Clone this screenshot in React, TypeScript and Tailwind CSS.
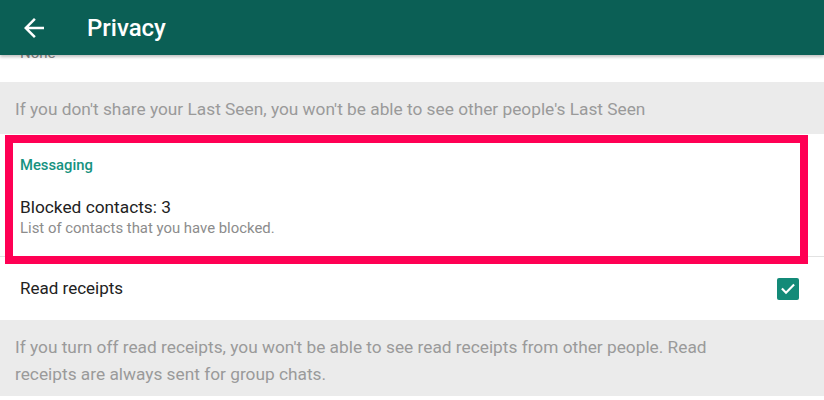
import React from "react";

export default function App() {
  return (
    <div className="w-[824px] h-[400px] overflow-hidden bg-white" style={{ fontFamily: "Roboto, 'Noto Sans', sans-serif" }}>
      <div className="relative z-10 h-[55px] bg-[#0b5f55] flex items-center shadow-[0_2px_3px_rgba(0,0,0,0.25)]">
        <div className="w-[87px] flex items-center pl-[19px]">
          <svg width="30" height="30" viewBox="0 0 24 24" fill="white">
            <path d="M20 11H7.83l5.59-5.59L12 4l-8 8 8 8 1.41-1.41L7.83 13H20v-2z" />
          </svg>
        </div>
        <span className="text-white text-[24px] font-medium leading-none">Privacy</span>
      </div>
      <div className="-mt-[12px]">
        <div className="h-[39px] bg-white pl-[20px]">
          <span className="block -mt-[2px] text-[15px] leading-[20px] text-[#8a8a8a]">None</span>
        </div>
        <div className="h-[52px] bg-[#ebebeb] px-[15px] pt-[14px]">
          <p className="text-[17.3px] leading-[26px] text-[#9a9a9a]">
            If you don't share your Last Seen, you won't be able to see other people's Last Seen
          </p>
        </div>
        <div className="relative h-[123px] bg-white border-b border-[#e2e2e2] pl-[20px] pt-[22px]">
          <div className="text-[14.8px] leading-[18px] font-medium text-[#16927f]">Messaging</div>
          <div className="mt-[22px] text-[17.3px] leading-[22px] text-[#222222]">Blocked contacts: 3</div>
          <div className="text-[14.9px] leading-[20px] text-[#8c8c8c]">List of contacts that you have blocked.</div>
          <div className="absolute left-[5px] top-[1px] w-[803px] h-[129px] border-[8px] border-[#ff0054]" />
        </div>
        <div className="h-[63px] bg-white flex items-center justify-between pl-[20px] pr-[25px]">
          <span className="text-[17px] text-[#222222]">Read receipts</span>
          <div className="w-[22px] h-[22px] rounded-[2px] bg-[#138a78] flex items-center justify-center">
            <svg width="16" height="16" viewBox="0 0 24 24" fill="none" stroke="white" strokeWidth="3.2" strokeLinecap="square">
              <path d="M4 12.5l5 5L20 6.5" />
            </svg>
          </div>
        </div>
        <div className="h-[76px] bg-[#ebebeb] pl-[15px] pr-[60px] pt-[14px]">
          <p className="text-[17.3px] leading-[27px] text-[#9a9a9a]">
            If you turn off read receipts, you won't be able to see read receipts from other people. Read receipts are always sent for group chats.
          </p>
        </div>
      </div>
    </div>
  );
}
